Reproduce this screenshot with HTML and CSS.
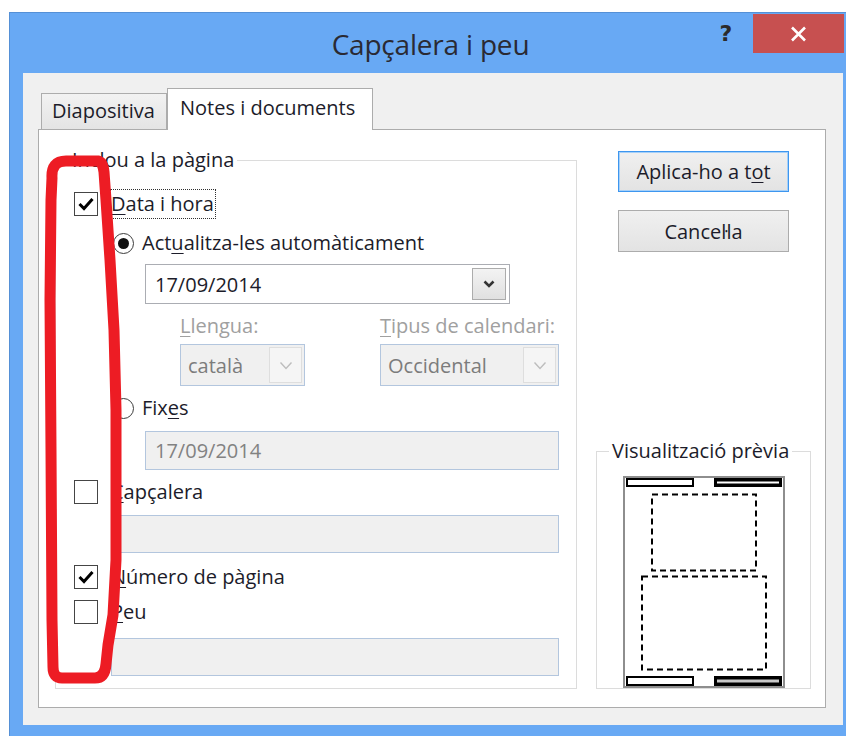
FILE: index.html
```html
<!DOCTYPE html>
<html lang="ca">
<head>
<meta charset="utf-8">
<title>Capçalera i peu</title>
<link rel="stylesheet" href="styles.css">
</head>
<body>
<div class="window">
  <div class="titlebar">
    <div></div>
    <div class="title">Capçalera i peu</div>
    <div class="caption-buttons">
      <div class="help">?</div>
      <div class="close">
        <svg width="17" height="16" viewBox="0 0 17 16"><path d="M2 1.5 L15 14.5 M15 1.5 L2 14.5" stroke="#fff" stroke-width="2.6" fill="none"/></svg>
      </div>
    </div>
  </div>

  <div class="client">
    <div class="tabs">
      <div class="tab">Diapositiva</div>
      <div class="tab active">Notes i documents</div>
    </div>

    <div class="panel">
      <fieldset class="group include">
        <legend>Inclou a la pàgina</legend>

        <div class="row r-data">
          <span class="cb checked"><svg width="16" height="14" viewBox="0 0 16 14"><path d="M1.5 7 L6 11.5 L14.5 2" stroke="#000" stroke-width="3" fill="none"/></svg></span>
          <span class="focus"><u>D</u>ata i hora</span>
        </div>

        <div class="row r-auto indent">
          <span class="radio on"></span>
          <span>Act<u>u</u>alitza-les automàticament</span>
        </div>

        <div class="combo date-combo">
          <span class="combo-text">17/09/2014</span>
          <span class="drop"><svg width="12" height="8" viewBox="0 0 12 8"><path d="M1.5 1.5 L6 6 L10.5 1.5" stroke="#333" stroke-width="2.6" fill="none"/></svg></span>
        </div>

        <div class="locale">
          <span class="dim-label"><u>L</u>lengua:</span>
          <span class="dim-label"><u>T</u>ipus de calendari:</span>
          <div class="combo disabled">
            <span class="combo-text">català</span>
            <span class="drop"><svg width="14" height="9" viewBox="0 0 14 9"><path d="M1.5 1.5 L7 7.5 L12.5 1.5" stroke="#bdbdbd" stroke-width="1.4" fill="none"/></svg></span>
          </div>
          <div class="combo disabled">
            <span class="combo-text">Occidental</span>
            <span class="drop"><svg width="14" height="9" viewBox="0 0 14 9"><path d="M1.5 1.5 L7 7.5 L12.5 1.5" stroke="#bdbdbd" stroke-width="1.4" fill="none"/></svg></span>
          </div>
        </div>

        <div class="row r-fixed indent">
          <span class="radio"></span>
          <span>Fix<u>e</u>s</span>
        </div>

        <div class="field fixed-field">17/09/2014</div>

        <div class="row r-header">
          <span class="cb"></span>
          <span><u>C</u>apçalera</span>
        </div>

        <div class="field text-field f-header"></div>

        <div class="row r-number">
          <span class="cb checked"><svg width="16" height="14" viewBox="0 0 16 14"><path d="M1.5 7 L6 11.5 L14.5 2" stroke="#000" stroke-width="3" fill="none"/></svg></span>
          <span><u>N</u>úmero de pàgina</span>
        </div>

        <div class="row r-footer">
          <span class="cb"></span>
          <span><u>P</u>eu</span>
        </div>

        <div class="field text-field f-footer"></div>
      </fieldset>

      <div class="side">
        <button class="btn default">Aplica-ho a t<u>o</u>t</button>
        <button class="btn">Cancel·la</button>

        <fieldset class="group preview">
          <legend>Visualització prèvia</legend>
          <svg class="page" width="162" height="212" viewBox="0 0 162 212">
            <rect x="1" y="1" width="160" height="210" fill="#fff" stroke="#8e8e8e" stroke-width="2"/>
            <!-- header bars -->
            <rect x="4" y="3" width="66" height="7" fill="#fff" stroke="#000" stroke-width="2"/>
            <rect x="91" y="2" width="68" height="9" fill="#000"/>
            <rect x="94" y="5.5" width="62" height="2" fill="#fff"/>
            <!-- body placeholders -->
            <rect x="29" y="18.5" width="104" height="76" fill="none" stroke="#000" stroke-width="2" stroke-dasharray="6 4"/>
            <rect x="19" y="100.5" width="124" height="93" fill="none" stroke="#000" stroke-width="2" stroke-dasharray="6 4"/>
            <!-- footer bars -->
            <rect x="4" y="201" width="66" height="8" fill="#fff" stroke="#000" stroke-width="2"/>
            <rect x="91" y="200" width="68" height="10" fill="#000"/>
            <rect x="94" y="203.5" width="62" height="3" fill="#c9c9c9"/>
          </svg>
        </fieldset>
      </div>
    </div>
  </div>
</div>

<svg class="marker" width="846" height="736" viewBox="0 0 846 736">
  <path d="M52 178 Q51 161 66 161 L98 161 Q103 162 104 172 L106 200 L108 230 L110 260 L114 330 L116 410 L116 500 L116 560 L113 615 L108 645 L106 664 Q105 678 95 678 L62 678 Q53 678 53 667 L52 620 L51 450 L50 300 L51 200 Z"
        fill="none" stroke="#ed1c24" stroke-width="11" stroke-linejoin="round"/>
</svg>
</body>
</html>
```

FILE: styles.css
```css
* { box-sizing: border-box; }

html, body { margin: 0; padding: 0; }

body {
  position: relative;
  width: 846px;
  height: 736px;
  overflow: hidden;
  background: #fff;
  font-family: "Open Sans", "Noto Sans", sans-serif;
  font-size: 20px;
  color: #1c1c2a;
}

u { text-decoration-thickness: 1px; text-underline-offset: 3px; }

/* ---------- window frame ---------- */
.window {
  margin: 12px 0 0 9px;
  width: 842px;
  height: 730px;
  background: #68a9f4;
  border-top: 1px solid #5590d6;
  border-left: 1px solid #5590d6;
  display: flex;
  flex-direction: column;
}

.titlebar {
  height: 60px;
  display: grid;
  grid-template-columns: 1fr auto 1fr;
  align-items: start;
}

.title {
  align-self: center;
  font-size: 28px;
  color: #2a2a33;
  letter-spacing: -0.2px;
  padding-top: 2px;
}

.caption-buttons {
  justify-self: end;
  display: flex;
  align-items: flex-start;
  margin-right: 7px;
}

.help {
  width: 30px;
  margin-top: 6px;
  margin-right: 12px;
  text-align: center;
  font-family: "DejaVu Sans", sans-serif;
  font-weight: bold;
  font-size: 22px;
  line-height: 30px;
  color: #2b2b2b;
}

.close {
  margin-top: 1px;
  width: 91px;
  height: 39px;
  background: #c75050;
  display: grid;
  place-items: center;
}

.client {
  margin-left: 13px;
  width: 820px;
  height: 652px;
  background: #f0f0f0;
  padding: 15px 0 0 15px;
}

/* ---------- tabs ---------- */
.tabs {
  display: flex;
  align-items: flex-end;
  height: 41px;
  padding-left: 3px;
}

.tab {
  height: 36px;
  width: 126px;
  padding-left: 10px;
  line-height: 34px;
  border: 1px solid #acacac;
  border-bottom: none;
  background: linear-gradient(#f2f2f2, #e4e4e4);
  font-size: 20px;
}

.tab.active {
  position: relative;
  z-index: 1;
  width: 206px;
  height: 42px;
  margin-bottom: -1px;
  padding-left: 12px;
  line-height: 38px;
  background: #fff;
}

.panel {
  width: 788px;
  height: 579px;
  border: 1px solid #acacac;
  background: #fff;
  display: flex;
  gap: 19px;
  padding: 18px 14px 18px 16px;
}

/* ---------- group boxes ---------- */
.group {
  margin: 0;
  min-width: 0;
  border: 1px solid #dcdcdc;
}

.group legend {
  padding: 0 3px;
  line-height: 24px;
  font-size: 20px;
}

.include {
  width: 522px;
  padding: 0 17px 0 18px;
}

.include legend { margin-left: -5px; }

.row {
  display: flex;
  align-items: center;
  height: 24px;
  white-space: nowrap;
  line-height: 24px;
}

.cb {
  flex: none;
  width: 24px;
  height: 24px;
  margin-right: 13px;
  border: 1px solid #454545;
  background: #fff;
  display: grid;
  place-items: center;
}

.focus {
  margin-left: -1px;
  padding: 2px 1px 2px 0;
  border: 1px dotted #303030;
}

.radio {
  flex: none;
  width: 21px;
  height: 21px;
  margin-right: 8px;
  border: 1px solid #3c3c3c;
  border-radius: 50%;
  background: #fff;
  display: grid;
  place-items: center;
}

.radio.on::after {
  content: "";
  width: 11px;
  height: 11px;
  border-radius: 50%;
  background: #111;
}

.indent { margin-left: 39px; }

.r-data   { margin-top: 20px; }
.r-auto   { margin-top: 15px; }
.r-fixed  { margin-top: 10px; }
.r-header { margin-top: 10px; }
.r-number { margin-top: 12px; }
.r-footer { margin-top: 11px; }

/* ---------- combos and fields ---------- */
.combo {
  display: flex;
  align-items: center;
  height: 40px;
  border: 1px solid #abadb3;
  background: #fff;
}

.combo-text { padding-left: 9px; flex: 1; }

.drop {
  flex: none;
  align-self: stretch;
  width: 34px;
  margin: 3px 3px 3px 0;
  border: 1px solid #acacac;
  background: linear-gradient(#f3f3f3, #e0e0e0);
  display: grid;
  place-items: center;
}

.date-combo {
  width: 365px;
  margin: 9px 0 0 71px;
}

.locale {
  display: grid;
  grid-template-columns: 125px 179px;
  column-gap: 75px;
  row-gap: 6px;
  margin: 10px 0 0 106px;
}

.dim-label {
  color: #a0a0a0;
  line-height: 24px;
  white-space: nowrap;
}

.combo.disabled {
  height: 42px;
  background: #f0f0f0;
  border-color: #b3c6de;
  color: #7c7c7c;
}

.combo.disabled .combo-text { padding-left: 7px; }

.combo.disabled .drop {
  width: 33px;
  margin: 2px 2px 2px 0;
  border-color: #dedede;
  background: #f5f5f5;
}

.field {
  height: 39px;
  border: 1px solid #b3c6de;
  background: #f0f0f0;
  color: #828282;
  padding-left: 9px;
  line-height: 37px;
}

.fixed-field { margin: 11px 0 0 71px; }

.text-field { margin-left: 37px; height: 38px; }
.f-header { margin-top: 11px; }
.f-footer { margin-top: 14px; }

/* ---------- right column ---------- */
.side {
  width: 215px;
  display: flex;
  flex-direction: column;
  align-items: flex-start;
}

.btn {
  width: 171px;
  height: 41px;
  margin-left: 22px;
  padding: 0;
  font-family: inherit;
  font-size: 20px;
  color: #1c1c2a;
  border: 1px solid #acacac;
  background: linear-gradient(#f0f0f0, #e3e3e3);
}

.btn.default {
  margin-top: 3px;
  border-color: #3d96ef;
  box-shadow: inset 0 0 0 1px #a6d0f8;
}

.btn + .btn { margin-top: 18px; height: 42px; }

.preview {
  margin-top: auto;
  width: 215px;
  padding: 0;
}

.preview legend { margin-left: 12px; }

.page {
  display: block;
  margin: 13px 0 0 26px;
}

/* ---------- hand-drawn marker over the checkbox column ---------- */
.marker {
  position: absolute;
  left: 0;
  top: 0;
  pointer-events: none;
}
```
